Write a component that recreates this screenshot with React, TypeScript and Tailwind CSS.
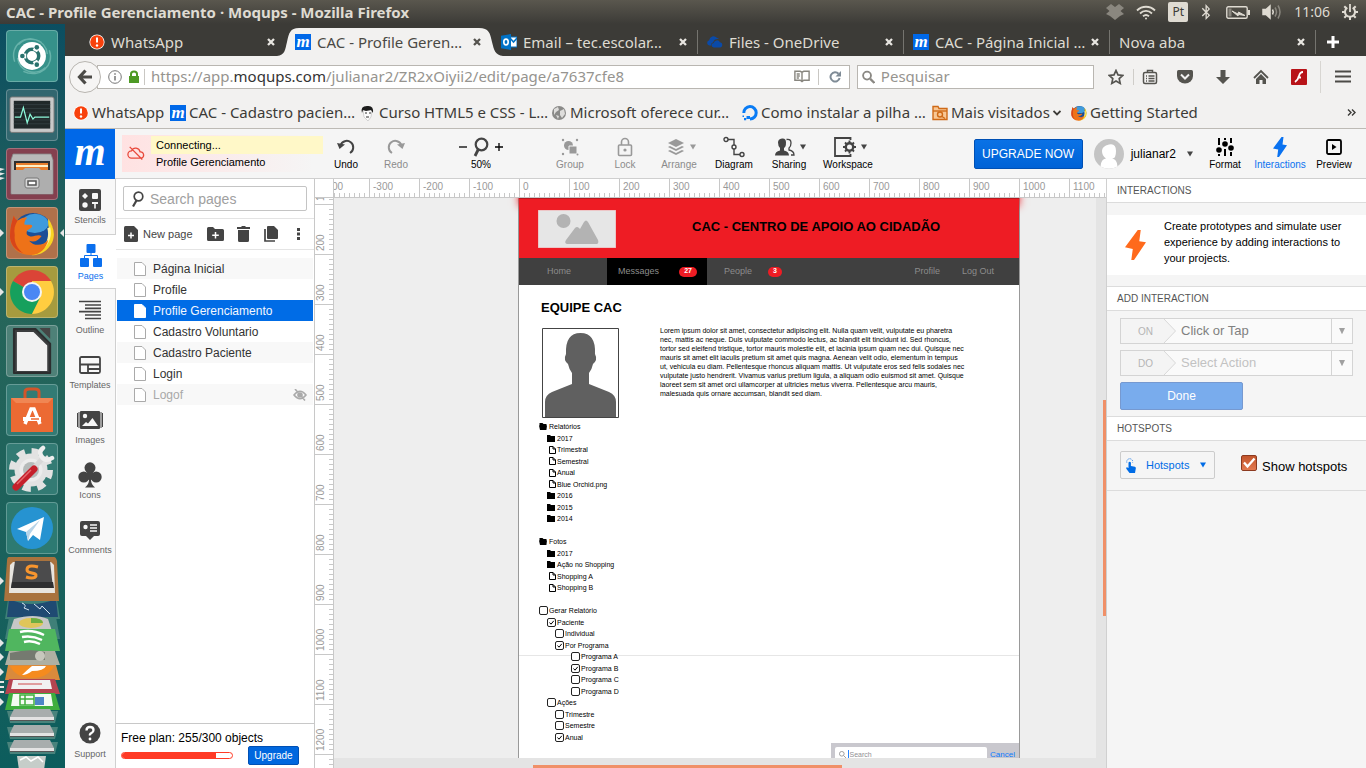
import React from "react";
import { FaBluetoothB } from "react-icons/fa";

type Kids = { children?: React.ReactNode };

const Caret = ({ className = "fill-[#444]" }: { className?: string }) => (
  <svg viewBox="0 0 8 6" className={"h-1.5 w-2 shrink-0 " + className} aria-hidden="true">
    <path d="M1 .5h6L4 5.5z" />
  </svg>
);

/* ---------- small brand marks ---------- */

const MoqupsMark = () => (
  <span className="flex size-4 shrink-0 items-center justify-center bg-[#0068e8] font-['Liberation_Serif',serif] text-[17px] leading-[14px] font-bold text-white italic">
    m
  </span>
);

const AlertMark = () => (
  <svg viewBox="0 0 16 16" className="size-4 shrink-0">
    <circle cx="8" cy="8" r="7.6" fill="#fff" />
    <circle cx="8" cy="8" r="6.8" fill="#f8410c" />
    <path d="M8 3.6v5" stroke="#fff" strokeWidth="2" />
    <circle cx="8" cy="11.5" r="1.2" fill="#fff" />
  </svg>
);

const FirefoxMark = ({ className = "size-4" }: { className?: string }) => (
  <svg viewBox="0 0 48 48" className={"shrink-0 " + className}>
    <circle cx="25" cy="24" r="21" fill="#1b4f97" />
    <ellipse cx="27" cy="14" rx="14" ry="10" fill="#3f9bdc" />
    <path d="M41 9c5 7 8 16 4 25-5 10-14 14-23 13 10-3 18-9 20-19 1-7-2-11-1-19z" fill="#f9d423" />
    <path d="M43 18c2 8 0 17-8 23 5-8 7-14 5-22z" fill="#fff3a0" />
    <path
      d="M5 6c1 3 2 4 4 5 3-2 6-4 10-3-2 2-3 4-3 7 3 1 6 0 8 1 1 2-2 4-5 5-1 3-1 5 2 6 4 2 8-2 13 0-3 5-8 7-13 5 5 6 14 6 20-1-2 9-9 16-18 16C10 47 1 39 1 27 1 19 3 12 5 6z"
      fill="#ee7218"
    />
    <path d="M5 6c1 3 2 4 4 5-3 5-4 9-3 15-1 8 3 15 9 19C6 42 1 35 1 27 1 19 3 12 5 6z" fill="#d8451a" />
  </svg>
);

const OutlookMark = () => (
  <svg viewBox="0 0 16 16" className="size-4 shrink-0">
    <path d="M9 3h7v10H9z" fill="#fff" stroke="#0072c6" />
    <path d="M9 4l3.500 4L16 4" fill="none" stroke="#0072c6" strokeWidth="1.500" />
    <path d="M0 1.700L10 0v16L0 14.300z" fill="#0072c6" />
    <ellipse cx="5" cy="8" rx="2.200" ry="2.900" fill="none" stroke="#fff" strokeWidth="1.600" />
  </svg>
);

const OneDriveMark = () => (
  <svg viewBox="0 0 16 16" className="size-4 shrink-0" fill="#0a4aa8">
    <path d="M2.500 11.500a2.700 2.700 0 0 1-.3-5.300A4.300 4.300 0 0 1 9.800 3.800 4 4 0 0 1 12 5Q7 4.500 6.300 8.200 4 8.800 4 11.500z" />
    <path d="M7 13.500a2.300 2.300 0 0 1-.3-4.600A3.400 3.400 0 0 1 13 8.200a2.700 2.700 0 0 1 .3 5.300z" />
  </svg>
);

/* ---------- desktop panel ---------- */

const TopPanel = () => (
  <header className="flex h-6 shrink-0 items-center bg-linear-to-b from-[#5a574e] to-[#3c3b37] pr-2 pl-1.5 text-[#dfdbd2]">
    <h1 className="flex-1 font-['Noto_Sans',sans-serif] text-[15px] font-bold">CAC - Profile Gerenciamento · Moqups - Mozilla Firefox</h1>
    <div className="flex items-center">
      <svg viewBox="0 0 18 16" className="mr-3 w-[18px] fill-[#8a877f]">
        <path d="M5 0l4 3 4-3 5 4-3.500 3L18 10l-4 2-5 4-5-4-4-2 3.500-3L0 4z" />
      </svg>
      <svg viewBox="0 0 20 15" className="mr-3 w-5 fill-none stroke-current" strokeWidth="1.800">
        <path d="M1 5.500c5-5 13-5 18 0M4 8.500c3.500-3.500 8.500-3.500 12 0M7 11.300c2-1.700 4-1.700 6 0" />
        <circle cx="10" cy="13.500" r="1" fill="currentColor" stroke="none" />
      </svg>
      <span className="mr-2.5 flex h-5 w-5 items-center justify-center rounded-xs bg-[#dfdbd2] font-['Noto_Sans',sans-serif] text-xs text-[#3c3b37]">Pt</span>
      <FaBluetoothB className="mr-3 size-4" />
      <svg viewBox="0 0 24 13" className="mr-3 w-6">
        <rect x=".8" y=".8" width="20.400" height="11.400" rx="1.500" fill="none" stroke="currentColor" strokeWidth="1.400" />
        <path d="M22 4h2v5h-2z" fill="currentColor" />
        <path d="M2.500 2.500h3v8h-3z" fill="#8a877f" />
        <path d="M6 5l6 3 .5-2L19 9.500l-6.500-1L12 10z" fill="currentColor" stroke="currentColor" />
      </svg>
      <svg viewBox="0 0 20 16" className="mr-3 w-5" fill="none" stroke="currentColor" strokeWidth="1.500">
        <path d="M1 5.500h3l4-3.500v12L4 10.500H1z" fill="currentColor" />
        <path d="M10.500 5.500q1.500 2.500 0 5" />
        <path d="M13 3.500q3 4.500 0 9M16 1.500q4 6.500 0 13" stroke="#8a877f" />
      </svg>
      <span className="mr-3 font-['Noto_Sans',sans-serif] text-sm">11:06</span>
      <svg viewBox="0 0 16 16" className="w-4" fill="none" stroke="currentColor">
        <path d="M5.300 3.600a5 5 0 1 0 5.400 0" strokeWidth="2" />
        <path d="M8 0v8" strokeWidth="1.800" />
        <path d="M8 13v3M0 8h3M13 8h3M2.300 2.300l2 2M13.700 2.300l-2 2M2.300 13.700l2-2M13.700 13.700l-2-2" strokeWidth="2" />
      </svg>
    </div>
  </header>
);

/* ---------- launcher ---------- */

const Tile = ({ tone, label, running, children }: Kids & { tone: string; label: string; running?: "left" | "both" | "many" }) => (
  <button aria-label={label} className={"relative ml-1.5 flex size-[52px] shrink-0 items-center justify-center rounded-sm border border-white/25 " + tone}>
    {children}
    {running && running !== "many" && (
      <svg viewBox="0 0 4 8" className="absolute top-[21px] -left-[7px] h-2 w-1 fill-[#e6e6e6]"><path d="M0 0l4 4-4 4z" /></svg>
    )}
    {running === "many" && (
      <svg viewBox="0 0 5 12" className="absolute top-[19px] -left-[7px] h-3 w-[5px] fill-[#e6e6e6]"><path d="M0 0l5 1-5 2zM0 4.500l5 1-5 2zM0 9l5 1-5 2z" /></svg>
    )}
    {running === "both" && (
      <svg viewBox="0 0 4 8" className="absolute top-[21px] -right-[7px] h-2 w-1 fill-[#e6e6e6]"><path d="M4 0L0 4l4 4z" /></svg>
    )}
  </button>
);

const Launcher = () => (
  <nav aria-label="Launcher" className="flex w-[65px] shrink-0 flex-col gap-[7px] overflow-hidden bg-linear-to-b from-[#0b4e61] via-[#27665a] via-35% to-[#0c5d5d] pt-1.5">
    <Tile tone="bg-[#36918a]" label="Dash">
      <svg viewBox="0 0 52 52" className="size-[50px]" fill="none">
        <path d="M8 32C2 14 20 2 36 12M44 20c6 16-10 30-27 22M12 14c10-10 28-6 30 10M40 38c-10 9-27 5-29-10" stroke="#7cc0b8" strokeWidth="1.500" opacity=".7" />
        <circle cx="26" cy="26" r="14.500" fill="#fff" />
        <circle cx="26" cy="26" r="7" stroke="#28716c" strokeWidth="3.600" />
        <path d="M14 26h6M32 15.500l-3 5.500M32 36.500L29 31" stroke="#fff" strokeWidth="5" />
        <circle cx="16" cy="26" r="2.400" fill="#28716c" />
        <circle cx="31" cy="17" r="2.400" fill="#28716c" />
        <circle cx="31" cy="35" r="2.400" fill="#28716c" />
      </svg>
    </Tile>
    <Tile tone="bg-[#3e6e76]/70" label="System monitor">
      <svg viewBox="0 0 48 40" className="w-[46px]">
        <rect x="1" y="1" width="46" height="37" rx="2" fill="#c9c9c9" stroke="#777" />
        <rect x="5" y="5" width="38" height="29" fill="#20292a" />
        <path d="M5 9h38M5 13h38M5 17h38M5 25h38M5 29h38" stroke="#39474a" strokeWidth=".7" />
        <path d="M6 22h6l3-10 4 16 3-9 3 5 2-2h15" fill="none" stroke="#8dfadb" strokeWidth="1.300" />
      </svg>
    </Tile>
    <Tile tone="bg-[#84404f]" label="Files" running="many">
      <svg viewBox="0 0 44 44" className="w-11">
        <path d="M3 2h38l2 6v34H1V8z" fill="#b9b9b9" stroke="#888" strokeWidth=".8" />
        <path d="M4 9h36v14H4z" fill="#303030" />
        <path d="M6 11h32v8H6z" fill="#e97e2c" />
        <path d="M6 13h32v2H6z" fill="#fff0c8" />
        <path d="M2 18h11l2-2h14l2 2h11v24H2z" fill="#aeaeae" />
        <rect x="15" y="26" width="14" height="10" rx="2" fill="#d7d7d7" stroke="#777" />
        <rect x="18" y="29" width="8" height="4" fill="#fff" stroke="#555" strokeWidth="1.500" />
      </svg>
    </Tile>
    <Tile tone="bg-[#b0714a]" label="Firefox" running="both"><FirefoxMark className="size-[46px]" /></Tile>
    <Tile tone="bg-[#a69b3e]" label="Chrome" running="left">
      <svg viewBox="0 0 44 44" className="size-11">
        <path d="M22 22L3 11A22 22 0 0 1 41 11z" fill="#db4437" />
        <path d="M22 22L3 11A22 22 0 0 0 22 44L30 28z" fill="#16a05d" />
        <path d="M41 11H22v11l8 6-8 16A22 22 0 0 0 41 11z" fill="#ffcd40" />
        <circle cx="22" cy="22" r="10" fill="#f5f5f5" />
        <circle cx="22" cy="22" r="8" fill="#4a87f4" />
      </svg>
    </Tile>
    <Tile tone="bg-[#4e8178]" label="LibreOffice">
      <svg viewBox="0 0 44 50" className="h-[49px]">
        <path d="M30 1h11v11z" fill="#454545" />
        <path d="M4 2h22l15 15v30H4z" fill="#3b3d3e" stroke="#2c2e2f" strokeLinejoin="round" strokeWidth="2" />
        <path d="M7 5h17l14 14v26H7z" fill="#f1f1f1" />
      </svg>
    </Tile>
    <Tile tone="bg-[#337b74]" label="Software">
      <svg viewBox="0 0 44 46" className="w-11" fill="none">
        <path d="M15 14V5q0-3 4-3h6q4 0 4 3v9" stroke="#d2552a" strokeWidth="3" />
        <path d="M1 11h42v34H1z" fill="#ec6a33" />
        <path d="M1 11h42l-5 5H6z" fill="#f08653" />
        <path d="M15 37l6-15h3l6 15" stroke="#fff" strokeWidth="3.500" />
        <path d="M13 32h18" stroke="#fff" strokeWidth="4" />
        <path d="M21 32h8" stroke="#ec6a33" strokeWidth="1.500" />
      </svg>
    </Tile>
    <Tile tone="bg-[#337b74]" label="Settings">
      <svg viewBox="0 0 48 48" className="w-12" fill="none">
        <circle cx="23" cy="25" r="18.500" stroke="#e2e2e2" strokeWidth="7" strokeDasharray="8 6.530" />
        <circle cx="23" cy="25" r="14" fill="#ececec" stroke="#e2e2e2" strokeWidth="5" />
        <circle cx="23" cy="25" r="8" fill="#b5bab9" />
        <path d="M9 41L36 12" stroke="#d8d8d8" strokeWidth="5" />
        <path d="M35 3q-5 4-1 9t10 1" stroke="#eee" strokeWidth="4.500" strokeLinecap="round" />
        <path d="M8 42l18-18" stroke="#c5202b" strokeWidth="7" strokeLinecap="round" />
        <path d="M9 39l14-14" stroke="#e56a6f" strokeWidth="1.500" />
      </svg>
    </Tile>
    <Tile tone="bg-[#2d7a72]" label="Telegram">
      <svg viewBox="0 0 44 44" className="w-11">
        <circle cx="22" cy="22" r="21" fill="#2693d1" />
        <path d="M34 11L7 23l9 3 2 9 5-6 7 5z" fill="#fff" />
        <path d="M16 26l14-12-10 14-2 7z" fill="#b8d4e8" />
      </svg>
    </Tile>
    <svg viewBox="0 0 65 211" className="-mt-1 w-[65px] shrink-0" aria-label="More applications">
      <path d="M9 36h47l4 26H5zM9 60h47l4 22H5z" fill="#3f8078" />
      <path d="M9 42q22 10 47 0l2 18H7z" fill="#1f4a72" />
      <path d="M22 46q5 2 2 5l5 2M34 47l6 5 2-3 8 8" stroke="#d6e4f0" fill="none" />
      <path d="M9 0h45q2 0 3 4l2 40H4L7 4q0-4 2-4z" fill="#a9733e" />
      <path d="M10 8l3-3h38l3 3 1 28H9z" fill="#e8e5df" />
      <path d="M15 4h35l3 27H11z" fill="#4b4b4c" />
      <path d="M12 25h41l1 6H11z" fill="#2f2f30" />
      <path d="M38 10q-11-3-11 3c0 4 10 2 9 6-1 3-7 2-10 1" fill="none" stroke="#f7952e" strokeWidth="3" />
      <path d="M14 62q20-6 34 0l4 12H10z" fill="#c7c7c7" />
      <ellipse cx="31" cy="66" rx="12" ry="5" fill="#e0c55a" />
      <path d="M31 61q12 0 12 5H31z" fill="#6dae43" />
      <path d="M9 72h46l5 22H5z" fill="#50b65f" />
      <path d="M20 75q12-3 24 3M22 80q10-2 20 3M24 85q8-2 16 2" stroke="#fff" strokeWidth="2.500" fill="none" />
      <path d="M9 94h46l5 14H5z" fill="#aeb0a3" />
      <path d="M10 96q20-5 35-1v8H10z" fill="#757a70" /><circle cx="40" cy="99" r="5" fill="#c6c7bc" />
      <path d="M8 108h48l4 15H5z" fill="#d98a3c" />
      <path d="M10 109h44q-6 12-22 12T10 109z" fill="#f58b1e" /><path d="M32 109h14q-2 5-14 5-5 4-10 4 5-5 10-9z" fill="#fff" />
      <path d="M9 122h46l5 15H5z" fill="#b54450" /><path d="M13 123h37l2 9H11z" fill="#f1f1f1" /><path d="M18 127h24" stroke="#cf4a4a" />
      <path d="M9 136h46l5 17H5z" fill="#3fae3d" /><path d="M13 137h38l2 12H11z" fill="#f4fbf2" />
      <path d="M20 138h14v10H20zM25 138v10M20 142h14" fill="none" stroke="#3fae3d" strokeWidth="1.500" /><path d="M35 140h9v8h-9z" fill="#4d86c6" />
      {[152, 168, 183].map((y) => (
        <g key={y}>
          <path d={`M10 ${y + 14}h45l3-12H7z`} fill="#4a837c" />
          <path d={`M14 ${y}h36l4 8H10z`} fill="#a8adad" />
          <path d={`M10 ${y + 8}h44v3H10z`} fill="#e3e3e3" />
          <path d={`M10 ${y + 11}h44v1H10z`} fill="#555" />
        </g>
      ))}
      <path d="M17 199h29l-2 14H19z" fill="#c6cdc9" />
      <path d="M20 203l6-3 5 4 7-4 5 5" stroke="#fff" fill="none" strokeWidth="1.500" />
      <path d="M0 20l4 4-4 4zM0 82l4 4-4 4zM0 96l4 4-4 4zM0 111l4 4-4 4zM0 141l4 4-4 4zM0 124h4v2H0zM0 129h4v2H0zM0 134h4v2H0z" fill="#e6e6e6" />
    </svg>
  </nav>
);

/* ---------- browser chrome ---------- */

const CloseX = ({ dark }: { dark?: boolean }) => (
  <button aria-label="Close tab" className="size-2.5 shrink-0">
    <svg viewBox="0 0 10 10" className={dark ? "stroke-[#55534e]" : "stroke-[#e8e6e1]"} strokeWidth="2.300"><path d="M2 2l6 6M8 2L2 8" /></svg>
  </button>
);

const tabs = [
  { label: "WhatsApp", icon: <AlertMark /> },
  { label: "CAC - Profile Geren…", icon: <MoqupsMark />, active: true },
  { label: "Email – tec.escolar…", icon: <OutlookMark />, line: true },
  { label: "Files - OneDrive", icon: <OneDriveMark />, line: true },
  { label: "CAC - Página Inicial …", icon: <MoqupsMark />, line: true },
  { label: "Nova aba", line: true },
];

const TabStrip = () => (
  <div role="tablist" className="flex h-8 items-center bg-[#3c3b37] pl-[15px] font-['Noto_Sans',sans-serif] text-[15px]">
    {tabs.map((t) => (
      <div
        key={t.label}
        role="tab"
        aria-selected={!!t.active}
        className={"relative flex h-8 max-w-[206px] min-w-0 flex-1 items-center gap-1.5 pt-1 pr-2.5 pl-[9px] " + (t.active ? "text-[#4a4945]" : "text-[#dfdbd2]")}
      >
        {t.active && (
          <svg viewBox="0 0 226 28" preserveAspectRatio="none" className="absolute top-1 -left-[9px] h-7 w-[226px] fill-[#f2f1f0]">
            <path d="M0 28c8-1 8-6 10-14C12 5 13 0 22 0h180c10 0 11 5 13 14 2 8 3 13 11 14z" />
          </svg>
        )}
        <span className="relative flex min-w-0 flex-1 items-center gap-1.5">
          {t.icon}
          <span className="whitespace-nowrap">{t.label}</span>
        </span>
        <span className="relative flex"><CloseX dark={t.active} /></span>
        {t.line && <span className="absolute top-1.5 right-0 h-6 w-px bg-[#75746f]" />}
      </div>
    ))}
    <button aria-label="New tab" className="ml-2.5 pt-1">
      <svg viewBox="0 0 14 14" className="size-3.5 stroke-white" strokeWidth="3"><path d="M7 1v12M1 7h12" /></svg>
    </button>
  </div>
);

const ToolIcon = ({ label, children }: Kids & { label: string }) => (
  <button aria-label={label} className="flex w-[38px] justify-center text-[#55544f]">{children}</button>
);

const NavBar = () => (
  <div className="flex h-[41px] items-center pr-0.5 pl-1">
    <button aria-label="Back" className="relative flex size-8 shrink-0 items-center justify-center rounded-full border border-[#b8b5b0] bg-[#f6f5f4]">
      <svg viewBox="0 0 16 16" className="size-4 fill-none stroke-[#4c4b47]" strokeWidth="3.200"><path d="M8.500 1.500L2.500 8l6 6.500M3 8h12" /></svg>
    </button>
    <div className="-ml-1 flex h-6 flex-1 items-center border border-[#b9b6b1] bg-white pr-2 pl-2.5">
      <svg viewBox="0 0 14 14" className="mr-1.5 size-3.5 fill-none stroke-[#777]"><circle cx="7" cy="7" r="6.300" /><path d="M7 6v4.500M7 3.300v1.500" strokeWidth="1.500" /></svg>
      <svg viewBox="0 0 12 14" className="mr-1 h-3.5 w-3" fill="#4e9a25"><path d="M1 6h10v7H1z" /><path d="M3 7V4q0-2.500 3-2.500T9 4v3" fill="none" stroke="#4e9a25" strokeWidth="2" /></svg>
      <span className="mr-1.5 h-4 w-px bg-[#c9c7c3]" />
      <span className="flex-1 font-['Noto_Sans',sans-serif] text-[15px] text-[#96948f]">
        https://app.<span className="text-[#333]">moqups.com</span>/julianar2/ZR2xOiyii2/edit/page/a7637cfe8
      </span>
      <svg viewBox="0 0 18 14" className="mr-2 w-4 fill-none stroke-[#88867f]" strokeWidth="1.600"><path d="M1 1.500h6l2 1 2-1h6v10h-6l-2 1.500-2-1.500H1zM9 3v9M3 4.500h3.500M3 6.800h3.500M3 9h2.500" /></svg>
      <span className="mr-2.5 h-4 w-px bg-[#c9c7c3]" />
      <svg viewBox="0 0 12 12" className="size-3 fill-none stroke-[#7f8b96]" strokeWidth="2"><path d="M9.500 2.800A4.600 4.600 0 1 0 10.600 7" /><path d="M12 0v5.500H6.500z" fill="#7f8b96" stroke="none" /></svg>
    </div>
    <div className="ml-[7px] flex h-6 w-[237px] items-center border border-[#b9b6b1] bg-white px-1">
      <svg viewBox="0 0 14 14" className="mr-1.5 size-3.5 fill-none stroke-[#8a8883]" strokeWidth="2"><circle cx="5.500" cy="5.500" r="4.300" /><path d="M9 9l4.500 4.500" strokeWidth="2.500" /></svg>
      <input aria-label="Pesquisar" placeholder="Pesquisar" className="w-full bg-transparent font-['Noto_Sans',sans-serif] text-[15px] outline-none placeholder:text-[#96948f]" />
    </div>
    <div className="flex items-center pl-1">
      <button aria-label="Bookmark" className="flex w-9 justify-center border-r border-[#cfcdc9] text-[#55544f]">
        <svg viewBox="0 0 16 16" className="size-4 fill-none stroke-current" strokeWidth="1.700"><path d="M8 1.500l2 4.400 4.800.5-3.600 3.200 1 4.800L8 12l-4.200 2.400 1-4.800L1.200 6.400 6 5.900z" /></svg>
      </button>
      <button aria-label="Library" className="flex w-8 justify-center text-[#55544f]">
        <svg viewBox="0 0 16 16" className="size-4 fill-none stroke-current" strokeWidth="1.500"><rect x="1.500" y="3.500" width="13" height="11" rx="1.500" /><path d="M5.500 3V1.500h5V3M4 7h1M6.500 7h6M4 9.500h1M6.500 9.500h6M4 12h1M6.500 12h6" /></svg>
      </button>
      <ToolIcon label="Pocket"><svg viewBox="0 0 16 16" className="size-4"><path d="M1.500 1h13q1.500 0 1.500 1.500V7a8 7.500 0 0 1-16 0V2.500Q0 1 1.500 1z" fill="currentColor" /><path d="M4 5.500l4 4 4-4" fill="none" stroke="#f2f1f0" strokeWidth="2" /></svg></ToolIcon>
      <ToolIcon label="Downloads"><svg viewBox="0 0 16 16" className="size-4 fill-current"><path d="M5.500 1h5v7H15l-7 7-7-7h4.500z" /></svg></ToolIcon>
      <ToolIcon label="Home"><svg viewBox="0 0 16 16" className="size-4"><path d="M1 9l7-7 7 7" fill="none" stroke="currentColor" strokeWidth="1.800" /><path d="M3 10l5-5 5 5v5H9.500v-4h-3v4H3z" fill="currentColor" /></svg></ToolIcon>
      <ToolIcon label="Flash"><svg viewBox="0 0 16 16" className="size-4"><rect width="16" height="16" rx="1" fill="#b81318" /><path d="M12 3Q9 3 8 7T4 13M6.500 8.500H10" fill="none" stroke="#fff" strokeWidth="1.800" /></svg></ToolIcon>
      <button aria-label="Menu" className="ml-0.5 flex h-8 w-11 items-center justify-center border-l border-[#d8d6d2] text-[#4c4b47]">
        <svg viewBox="0 0 16 13" className="w-4 stroke-current" strokeWidth="2.200"><path d="M0 1.500h16M0 6.500h16M0 11.500h16" /></svg>
      </button>
    </div>
  </div>
);

const bookmarks = [
  { w: "w-[97px]", label: "WhatsApp", icon: <AlertMark /> },
  { w: "w-[190px]", label: "CAC - Cadastro pacien…", icon: <MoqupsMark /> },
  {
    w: "w-[191px]",
    label: "Curso HTML5 e CSS - L…",
    icon: (
      <svg viewBox="0 0 16 16" className="size-4 shrink-0"><path d="M3 5h9l-1 7-3 4-4-4z" fill="#fbfbfb" stroke="#bbb" strokeWidth=".6" /><path d="M2 8Q0 1 7 1q7-1 6 7l-2-3-5 1-3-1z" fill="#1c1c1c" /><path d="M5 8h2M9 8h2M6 12h3" stroke="#333" /></svg>
    ),
  },
  {
    w: "w-[191px]",
    label: "Microsoft oferece cur…",
    icon: (
      <svg viewBox="0 0 16 16" className="size-4 shrink-0"><circle cx="8" cy="8" r="7" fill="#8a8a88" /><path d="M3 4l4-2 1 3-3 2-2 3zM9 6l4-2 1 5-3 4-2-3zM5 10l3 1-1 3z" fill="#dedddb" /></svg>
    ),
  },
  {
    w: "w-[190px]",
    label: "Como instalar a pilha …",
    icon: (
      <svg viewBox="0 0 16 16" className="size-4 shrink-0"><path d="M8 14a6.200 6.200 0 1 0-6.200-6" fill="none" stroke="#0a7cf5" strokeWidth="3" /><path d="M4.500 11H8v3H4.500zM2 13h2.200v2.200H2zM.5 10.500h1.500v1.500H.5z" fill="#0a7cf5" /></svg>
    ),
  },
  {
    w: "w-[139px]",
    label: "Mais visitados",
    arrow: true,
    icon: (
      <svg viewBox="0 0 16 16" className="size-4 shrink-0 fill-none stroke-[#cf6a17]" strokeWidth="1.400"><path d="M1 14.500V1.500h5l1 2h8v11z" fill="#f8c795" /><path d="M1 6h14" /><circle cx="8" cy="9.500" r="2.500" /><path d="M10 11.500l3 2" /></svg>
    ),
  },
  { w: "w-[130px]", label: "Getting Started", icon: <FirefoxMark /> },
];

const BookmarkBar = () => (
  <div className="flex h-8 items-center border-b border-[#bdbab5] pl-2 font-['Noto_Sans',sans-serif] text-[15px] text-[#3c3b37]">
    {bookmarks.map((b) => (
      <a key={b.label} href="#" className={"flex shrink-0 items-center gap-[3px] whitespace-nowrap " + b.w}>
        {b.icon}
        <span>{b.label}</span>
        {b.arrow && <svg viewBox="0 0 8 6" className="w-2 shrink-0 fill-none stroke-current" strokeWidth="1.800"><path d="M.5 1L4 4.500 7.500 1" /></svg>}
      </a>
    ))}
    <button aria-label="More bookmarks" className="mr-2.5 ml-auto">
      <svg viewBox="0 0 9 7" className="w-[9px] fill-none stroke-current" strokeWidth="1.400"><path d="M1 .5l3 3-3 3M5 .5l3 3-3 3" /></svg>
    </button>
  </div>
);

/* ---------- application header ---------- */

const Tool = ({ label, w, tone = "text-black", icon = "text-[#444]", children }: Kids & { label: string; w: string; tone?: string; icon?: string }) => (
  <button className={"flex shrink-0 flex-col items-center gap-0.5 pt-px text-[10px] leading-3 " + w + " " + tone}>
    <span className={"flex h-5 items-center gap-1 " + icon}>{children}</span>
    {label}
  </button>
);

const Bolt = ({ className }: { className: string }) => (
  <svg viewBox="0 0 14 20" className={"fill-current " + className}><path d="M8.500 0h2l-1 7.500 4.500.7L6 20H4.200l1-7.400L0 11.500z" /></svg>
);

const AppHeader = () => (
  <header className="flex h-[50px] shrink-0 items-center border-b border-[#cfcfcf] bg-[#f5f5f5]">
    <a href="#" aria-label="Moqups" className="flex h-[50px] w-[50px] shrink-0 items-center justify-center self-start bg-[#0068e8] pb-1 font-['Liberation_Serif',serif] text-[40px] leading-none font-bold text-white italic">
      m
    </a>
    <div className="mr-2 ml-[7px] flex h-[37px] w-[191px] shrink-0 items-center bg-linear-to-r from-[#ffe2e2] to-[#f5f5f5] text-[11px] text-black">
      <svg viewBox="0 0 20 16" className="mr-1.5 ml-[5px] w-[18px] shrink-0 fill-none stroke-[#e8483a]" strokeWidth="1.400">
        <path d="M5.500 13.500H5a4 4 0 0 1 0-8 5 5 0 0 1 9.500 1A3.600 3.600 0 0 1 16 13.500H5.500M3 1l14 14" />
      </svg>
      <div className="-mr-2.5 flex-1 self-start pt-px">
        <p className="bg-[#fff8c8] pl-[5px] leading-[18px]">Connecting...</p>
        <p className="pl-[5px] leading-[17px]">Profile Gerenciamento</p>
      </div>
    </div>
    <Tool label="Undo" w="w-[50px]">
      <svg viewBox="0 0 18 16" className="w-[18px] fill-none stroke-current" strokeWidth="2"><path d="M3.500 6.500A6.500 6.500 0 1 1 13 14" /><path d="M0 4l8 1.500L2.500 10z" fill="currentColor" stroke="none" /></svg>
    </Tool>
    <Tool label="Redo" w="w-[50px]" tone="text-[#8b8b8b]" icon="text-[#999]">
      <svg viewBox="0 0 18 16" className="w-[18px] -scale-x-100 fill-none stroke-current" strokeWidth="2"><path d="M3.500 6.500A6.500 6.500 0 1 1 13 14" /><path d="M0 4l8 1.500L2.500 10z" fill="currentColor" stroke="none" /></svg>
    </Tool>
    <Tool label="50%" w="w-[120px]">
      <svg viewBox="0 0 8 8" className="w-2 stroke-black" strokeWidth="1.300"><path d="M0 4h8" /></svg>
      <svg viewBox="0 0 18 20" className="mx-px w-[18px] fill-none stroke-current" strokeWidth="2.200"><circle cx="9.500" cy="7.500" r="5.800" /><path d="M6.500 12L3 19" strokeWidth="2.800" /></svg>
      <svg viewBox="0 0 8 8" className="w-2 stroke-black" strokeWidth="1.300"><path d="M0 4h8M4 0v8" /></svg>
    </Tool>
    <Tool label="Group" w="w-[58px]" tone="text-[#8b8b8b]" icon="text-[#999]">
      <svg viewBox="0 0 18 18" className="w-[18px] fill-current"><circle cx="7.500" cy="7.500" r="4.500" /><path d="M8 8h8v8H8z" stroke="#f5f5f5" /><circle cx="2" cy="2" r="1.200" /><circle cx="16" cy="2" r="1.200" /><circle cx="2" cy="16" r="1.200" /><circle cx="16.500" cy="16.500" r="1" /></svg>
    </Tool>
    <Tool label="Lock" w="w-[52px]" tone="text-[#8b8b8b]" icon="text-[#999]">
      <svg viewBox="0 0 16 20" className="h-5 fill-none stroke-current" strokeWidth="1.600"><rect x="1.500" y="8" width="13" height="10.500" rx="1" /><path d="M4.500 8V5a3.500 3.500 0 0 1 7 0v3" /><circle cx="8" cy="13" r="1.600" fill="currentColor" stroke="none" /></svg>
    </Tool>
    <Tool label="Arrange" w="w-[56px]" tone="text-[#8b8b8b]" icon="text-[#999]">
      <svg viewBox="0 0 18 18" className="ml-1.5 w-[18px] fill-current"><path d="M9 1l8 4-8 4-8-4zM1 9l2-1 6 3 6-3 2 1-8 4zM1 13l2-1 6 3 6-3 2 1-8 4z" /></svg>
      <Caret className="fill-[#999]" />
    </Tool>
    <Tool label="Diagram" w="w-[54px]">
      <svg viewBox="0 0 22 22" className="w-[22px] fill-none stroke-current" strokeWidth="1.400"><circle cx="3" cy="3.500" r="2" /><circle cx="11" cy="11" r="2" /><circle cx="19" cy="18.500" r="2" /><path d="M5 3.500h6V9M11 13v5.500h6" /></svg>
    </Tool>
    <Tool label="Sharing" w="w-[56px]">
      <svg viewBox="0 0 20 18" className="ml-1 w-5 fill-current"><path d="M0 17.500q0-4 5-5V10Q3 8 3 4.500T7 .5t4 4T9 10v2.500q5 1 5 5z" /><path d="M11.500 1.500q4.500-1 4.500 3.500Q16 8.500 14 10v2q5 1 5 5h-3" fill="none" stroke="currentColor" strokeWidth="1.300" /></svg>
      <Caret />
    </Tool>
    <Tool label="Workspace" w="w-[62px]">
      <svg viewBox="0 0 22 20" className="ml-1.5 w-[22px] fill-none stroke-current"><path d="M16.500 3V1H1v18h15.500v-2" strokeWidth="1.800" /><circle cx="15.500" cy="10" r="3.700" strokeWidth="2.400" /><path d="M15.500 3.500v3M15.500 13.500v3M9 10h3M19 10h3M11 5.500l2 2M20 5.500l-2 2M11 14.500l2-2M20 14.500l-2-2" strokeWidth="1.900" /></svg>
      <Caret />
    </Tool>
    <div className="ml-auto flex items-center">
      <button className="h-[30px] w-[109px] rounded-xs border border-[#0050b4] bg-linear-to-b from-[#0a72e6] to-[#0062d6] text-xs text-white">UPGRADE NOW</button>
      <svg viewBox="0 0 30 30" className="ml-[11px] size-[30px]"><circle cx="15" cy="15" r="15" fill="#c4c4c4" /><path d="M6.500 27.500Q7 20 12 19.500 8 17 8 12t7-6.500T22 12t-4 7.500q5 .5 5.500 8Q15 32 6.500 27.500z" fill="#fff" /></svg>
      <button className="ml-[7px] flex items-center gap-2.5 text-xs text-black">julianar2 <Caret /></button>
      <Tool label="Format" w="ml-1 w-[54px]" icon="text-black">
        <svg viewBox="0 0 18 20" className="w-[18px] fill-current"><path d="M2 1h2v7H2zM2 17h2v2H2zM8 1h2v2H8zM8 12h2v7H8zM14 1h2v5h-2zM14 15h2v4h-2z" /><circle cx="3" cy="13" r="2.800" /><circle cx="9" cy="7" r="2.800" /><circle cx="15" cy="11" r="2.800" /></svg>
      </Tool>
      <Tool label="Interactions" w="w-[56px]" tone="text-[#0a72f0]" icon="text-[#0a72f0]"><Bolt className="h-5 w-3.5" /></Tool>
      <Tool label="Preview" w="mr-1.5 w-[52px]" icon="text-black">
        <svg viewBox="0 0 16 16" className="w-4"><rect x="1" y="1" width="14" height="14" rx="1.500" fill="none" stroke="currentColor" strokeWidth="1.800" /><path d="M6 5l4.500 3L6 11z" fill="currentColor" /></svg>
      </Tool>
    </div>
  </header>
);

/* ---------- left rail ---------- */

const railItems = [
  { label: "Stencils", icon: <svg viewBox="0 0 22 22" className="w-[22px]"><rect width="22" height="22" rx="2" fill="currentColor" /><g fill="#f8f8f8"><path d="M6 4l3 3-3 3-3-3z" /><rect x="13" y="4" width="6" height="6" rx="1" /><circle cx="6" cy="16" r="2.700" /><path d="M13 13h6v2h-2.200v4.500h-1.600V15H13z" /></g></svg> },
  { label: "Pages", icon: <svg viewBox="0 0 22 24" className="w-[22px] fill-current"><rect x="6.500" width="9" height="9" rx="1" /><rect y="14" width="9" height="9" rx="1" /><rect x="13" y="14" width="9" height="9" rx="1" /><path d="M11 9v2M4.500 14v-2.500h13V14" fill="none" stroke="currentColor" /></svg> },
  { label: "Outline", icon: <svg viewBox="0 0 22 20" className="w-[22px] stroke-current" strokeWidth="1.700"><path d="M0 1.500h22M6 5h16M6 8.300h16M0 11.700h22M6 15h16M6 18.500h16" /></svg> },
  { label: "Templates", icon: <svg viewBox="0 0 22 18" className="w-[22px] fill-none stroke-current" strokeWidth="1.800"><rect x="1" y="1" width="20" height="16" rx="1.500" /><path d="M1 8.500h20M9 8.500V17M9 13h12" /></svg> },
  { label: "Images", icon: <svg viewBox="0 0 26 18" className="w-[26px] fill-current"><path d="M0 2h1v14H0zM25 2h1v14h-1zM1.500 1h1v16h-1zM23.500 1h1v16h-1z" /><rect x="3" width="20" height="18" rx="1" /><circle cx="8" cy="5" r="2.200" fill="#f8f8f8" /><path d="M5 15l4-4 2 1.500L15.500 7l5.500 8z" fill="#f8f8f8" /></svg> },
  { label: "Icons", icon: <svg viewBox="0 0 24 26" className="w-6 fill-current"><circle cx="12" cy="5.800" r="5.500" /><circle cx="5.800" cy="15" r="5.500" /><circle cx="18.200" cy="15" r="5.500" /><path d="M10 8h4l3 8-4 2q0 4 4 7.500H7Q11 22 11 18l-4-2z" /></svg> },
  { label: "Comments", icon: <svg viewBox="0 0 20 19" className="w-5 fill-current"><path d="M2 0h16q2 0 2 2v11q0 2-2 2h-4l-4 4-4-4H2q-2 0-2-2V2Q0 0 2 0z" /><circle cx="5.500" cy="6" r="2.200" fill="#f8f8f8" /><path d="M10 4h7M10 7h7M10 10h7" stroke="#f8f8f8" strokeWidth="1.500" /></svg> },
];

const Rail = () => (
  <nav aria-label="Tools" className="flex w-[51px] shrink-0 flex-col bg-[#f8f8f8]">
    {railItems.map((r) => (
      <button
        key={r.label}
        className={
          "flex h-[55px] shrink-0 flex-col items-center text-[9px] leading-3 " +
          (r.label === "Pages" ? "border-y border-[#d0d0d0] bg-white text-[#0a6fee]" : "border-r border-[#d0d0d0] text-[#666]")
        }
      >
        <span className={"flex h-[34px] items-center pt-2 " + (r.label === "Pages" ? "text-[#0a6fee]" : "text-[#444]")}>{r.icon}</span>
        <span className="mt-px">{r.label}</span>
      </button>
    ))}
    <div className="flex flex-1 flex-col items-center justify-end border-r border-[#d0d0d0] pb-2 text-[9px] leading-3 text-[#666]">
      <svg viewBox="0 0 22 22" className="mb-1 w-[22px]"><circle cx="11" cy="11" r="10.500" fill="#444" /><path d="M7.500 8.500q0-3.500 3.500-3.500t3.500 3q0 2-2 3t-1.500 2.500" fill="none" stroke="#fff" strokeWidth="2.300" /><circle cx="11" cy="17" r="1.400" fill="#fff" /></svg>
      Support
    </div>
  </nav>
);

/* ---------- pages panel ---------- */

const pages = ["Página Inicial", "Profile", "Profile Gerenciamento", "Cadastro Voluntario", "Cadastro Paciente", "Login", "Logof"];

const PagesPanel = () => (
  <aside className="flex w-[199px] shrink-0 flex-col border-r border-[#c8c8c8] bg-white">
    <div className="border-b border-[#e4e4e4] px-[7px] pt-[7px] pb-[7px]">
      <div className="flex h-[25px] items-center rounded-xs border border-[#c4c4c4] pl-2">
        <svg viewBox="0 0 12 16" className="mr-1.5 h-4 shrink-0 fill-none stroke-[#444]" strokeWidth="1.700"><circle cx="6.500" cy="5.500" r="4.300" /><path d="M4.500 9.500l-3.500 6" strokeWidth="2.200" /></svg>
        <input aria-label="Search pages" placeholder="Search pages" className="w-full text-sm outline-none placeholder:text-[#a0a0a0]" />
      </div>
    </div>
    <div className="flex h-[31px] items-center border-b border-[#e4e4e4] pl-2 text-[#444]">
      <button className="flex items-center gap-[5px] text-[11px]">
        <svg viewBox="0 0 14 16" className="w-3.5"><path d="M1.500 0H10l4 4v10.500q0 1.500-1.500 1.500h-11Q0 16 0 14.500v-13Q0 0 1.500 0z" fill="currentColor" /><path d="M7 6.500v6M4 9.500h6" stroke="#fff" strokeWidth="1.500" /></svg>
        New page
      </button>
      <button aria-label="New folder" className="ml-[14px]"><svg viewBox="0 0 17 14" className="w-[17px]"><path d="M0 1.500Q0 0 1.500 0H6l2 2h7.500Q17 2 17 3.500v9q0 1.500-1.500 1.500h-14Q0 14 0 12.500z" fill="currentColor" /><path d="M8.500 5v6.500M5.200 8.200h6.600" stroke="#fff" strokeWidth="1.500" /></svg></button>
      <button aria-label="Delete page" className="ml-[13px]"><svg viewBox="0 0 13 16" className="w-[13px] fill-current"><path d="M0 1h4l1-1h3l1 1h4v2H0zM1 4h11v10.500q0 1.500-1.500 1.500h-8Q1 16 1 14.500z" /></svg></button>
      <button aria-label="Duplicate page" className="ml-[14px]"><svg viewBox="0 0 14 16" className="w-3.5 fill-current"><path d="M4 0h6l4 4v8q0 1-1 1H4q-1 0-1-1V1q0-1 1-1z" /><path d="M1 3v12h10" fill="none" stroke="currentColor" strokeWidth="1.700" /></svg></button>
      <button aria-label="More" className="ml-[19px]"><svg viewBox="0 0 3 12" className="w-[3px] fill-current"><path d="M0 0h3v3H0zM0 4.500h3v3H0zM0 9h3v3H0z" /></svg></button>
    </div>
    <ul className="flex-1 pt-2 pr-px pl-px text-xs text-[#333]">
      {pages.map((p, i) => (
        <li
          key={p}
          className={
            "flex h-[21px] items-center pr-1.5 pl-[17px] " +
            (i === 2 ? "bg-[#006ce6] text-[#f2f7ff]" : i % 2 === 0 ? "bg-[#f8f8f8]" : "") +
            (p === "Logof" ? " text-[#a8a8a8]" : "")
          }
        >
          <svg viewBox="0 0 12 14" className={"mr-[7px] w-3 fill-white " + (i === 2 ? "stroke-white" : "stroke-[#aaa]")}><path d="M.5.500H8L11.500 4v9.500H.5z" /></svg>
          <a href="#" className="flex-1">{p}</a>
          {p === "Logof" && (
            <svg viewBox="0 0 14 12" className="w-3.5 fill-none stroke-[#aaa]" strokeWidth="1.600"><path d="M1 6q6-7.500 12 0-6 7.500-12 0zM2 0l10 11.500" /><circle cx="7" cy="6" r="2" fill="#aaa" /></svg>
          )}
        </li>
      ))}
    </ul>
    <div className="h-[45px] border-t border-[#c8c8c8] px-[5px] pt-1.5">
      <p className="text-xs leading-4 text-black">Free plan: 255/300 objects</p>
      <div className="flex items-center justify-between pr-2.5">
        <div className="h-[7px] w-28 overflow-hidden rounded-full border border-[#ff3b26]"><div className="h-full w-[85%] bg-[#ff3b26]" /></div>
        <button className="h-[19px] w-[51px] rounded-xs border border-[#0050b4] bg-[#0067de] text-[10px] leading-4 text-white">Upgrade</button>
      </div>
    </div>
  </aside>
);

/* ---------- canvas ---------- */

const hLabels = ["-400", "-300", "-200", "-100", "0", "100", "200", "300", "400", "500", "600", "700", "800", "900", "1000", "1100"];
const vLabels = ["100", "200", "300", "400", "500", "600", "700", "800", "900", "1000", "1100", "1200", ""];

const HRuler = () => (
  <div className="h-[19px] shrink-0 overflow-hidden border-b border-[#c8c8c8] bg-white pl-[18px]">
    <div className="h-full overflow-hidden border-l border-[#c8c8c8]">
      <div className="-ml-[15px] flex h-full text-[10px] leading-4 text-[#999]">
        {hLabels.map((l) => (
          <div key={l} className="flex w-[50px] shrink-0 flex-col border-l border-[#c8c8c8]">
            <span className="h-3.5 pl-[3px]">{l}</span>
            <span className="-ml-px h-1 bg-[repeating-linear-gradient(to_right,#c8c8c8_0,#c8c8c8_1px,transparent_1px,transparent_5px)]" />
          </div>
        ))}
      </div>
    </div>
  </div>
);

const VRuler = () => (
  <div className="w-[19px] shrink-0 overflow-hidden border-r border-[#c8c8c8] bg-white">
    <div className="-mt-[43px] text-[10px] leading-3 text-[#999]">
      {vLabels.map((l) => (
        <div key={l} className="flex h-[50px] border-b border-[#c8c8c8]">
          <span className="w-3.5 rotate-180 pt-[3px] [writing-mode:vertical-rl]">{l}</span>
          <span className="-mb-px w-1 bg-[repeating-linear-gradient(to_top,#c8c8c8_0,#c8c8c8_1px,transparent_1px,transparent_5px)]" />
        </div>
      ))}
    </div>
  </div>
);

type Node = { t: string; k: "open" | "dir" | "file" | "off" | "on" | "gap"; d: number };
const tree: Node[] = [
  { t: "Relatórios", k: "open", d: 0 },
  { t: "2017", k: "dir", d: 1 },
  { t: "Trimestral", k: "file", d: 1 },
  { t: "Semestral", k: "file", d: 1 },
  { t: "Anual", k: "file", d: 1 },
  { t: "Blue Orchid.png", k: "file", d: 1 },
  { t: "2016", k: "dir", d: 1 },
  { t: "2015", k: "dir", d: 1 },
  { t: "2014", k: "dir", d: 1 },
  { t: "", k: "gap", d: 0 },
  { t: "Fotos", k: "open", d: 0 },
  { t: "2017", k: "dir", d: 1 },
  { t: "Ação no Shopping", k: "dir", d: 1 },
  { t: "Shopping A", k: "file", d: 1 },
  { t: "Shopping B", k: "file", d: 1 },
  { t: "", k: "gap", d: 0 },
  { t: "Gerar Relatório", k: "off", d: 0 },
  { t: "Paciente", k: "on", d: 1 },
  { t: "Individual", k: "off", d: 2 },
  { t: "Por Programa", k: "on", d: 2 },
  { t: "Programa A", k: "off", d: 3 },
  { t: "Programa B", k: "on", d: 3 },
  { t: "Programa C", k: "off", d: 3 },
  { t: "Programa D", k: "off", d: 3 },
  { t: "Ações", k: "off", d: 1 },
  { t: "Trimestre", k: "off", d: 2 },
  { t: "Semestre", k: "off", d: 2 },
  { t: "Anual", k: "on", d: 2 },
];
const indents = ["pl-0", "pl-2", "pl-4", "pl-8"];

const TreeRow = ({ n }: { n: Node }) => {
  const row = "flex items-center " + indents[n.d];
  if (n.k === "off" || n.k === "on")
    return (
      <li className="grid">
        <label className={row}>
          <span className="relative flex w-2.5">
            <input type="checkbox" defaultChecked={n.k === "on"} className="peer size-[9px] appearance-none rounded-[2px] border border-[#222] bg-white" />
            <svg viewBox="0 0 9 9" className="pointer-events-none absolute size-[9px] fill-none stroke-black opacity-0 peer-checked:opacity-100"><path d="M2.500 4.500l1.500 1.700L6.800 2.800" /></svg>
          </span>
          {n.t}
        </label>
      </li>
    );
  return (
    <li className={row}>
      {n.k !== "gap" && (
        <span className="flex w-2.5">
          {n.k === "file" && <svg viewBox="0 0 7 8" className="ml-0.5 h-2 fill-white stroke-black"><path d="M.5.500h3.500L6.500 3v4.500h-6zM4 .5V3h2.500" /></svg>}
          {n.k === "dir" && <svg viewBox="0 0 8 7" className="w-2"><path d="M0 0h3l1 1h4v6H0z" /></svg>}
          {n.k === "open" && <svg viewBox="0 0 8 7" className="w-2"><path d="M.5 0h3l1 1H7.500v1.500h.5L7.400 7H1L0 2.500h.5z" /></svg>}
        </span>
      )}
      {n.t}
    </li>
  );
};

const lorem = [
  "Lorem ipsum dolor sit amet, consectetur adipiscing elit. Nulla quam velit, vulputate eu pharetra",
  "nec, mattis ac neque. Duis vulputate commodo lectus, ac blandit elit tincidunt id. Sed rhoncus,",
  "tortor sed eleifend tristique, tortor mauris molestie elit, et lacinia ipsum quam nec dui. Quisque nec",
  "mauris sit amet elit iaculis pretium sit amet quis magna. Aenean velit odio, elementum in tempus",
  "ut, vehicula eu diam. Pellentesque rhoncus aliquam mattis. Ut vulputate eros sed felis sodales nec",
  "vulputate justo hendrerit. Vivamus varius pretium ligula, a aliquam odio euismod sit amet. Quisque",
  "laoreet sem sit amet orci ullamcorper at ultricies metus viverra. Pellentesque arcu mauris,",
  "malesuada quis ornare accumsan, blandit sed diam.",
];

const Badge = ({ children }: Kids) => (
  <span className="flex h-2.5 items-center rounded-full bg-[#ee1c24] px-[5px] text-[7px] font-bold text-white">{children}</span>
);

const PageArt = () => (
  <div className="relative ml-[184px] flex min-h-full w-[502px] flex-col border-x border-[#999] bg-white text-black">
    <div className="flex h-[60px] shrink-0 items-center border-t border-[#b5161c] bg-[#ee1c24] pl-[19px] shadow-[0_-52px_8px_#ee1c24]">
      <svg viewBox="0 0 78 38" className="w-[78px]"><path d="M0 0h78v38H0z" fill="#e6e6e6" stroke="#f4a5a8" /><circle cx="25.500" cy="11" r="7" fill="#b3b3b3" /><path d="M29 34q-3-1-1-4l9-12q2-2 4 0l1 1 4-7q2-3 4 0l10 18q1 3-1 4z" fill="#b3b3b3" /></svg>
      <h2 className="ml-[76px] pb-1 text-[13px] font-bold">CAC - CENTRO DE APOIO AO CIDADÃO</h2>
    </div>
    <div className="flex h-[27px] shrink-0 items-stretch bg-[#404040] text-[9px] text-[#8c8c8c]">
      <span className="flex w-[88px] items-center pl-7">Home</span>
      <span className="flex w-[100px] items-center justify-between bg-black pr-2.5 pl-[11px]">Messages <Badge>27</Badge></span>
      <span className="flex flex-1 items-center gap-4 pl-[17px]">People <Badge>3</Badge></span>
      <span className="flex items-center gap-[22px] pr-[25px]"><span>Profile</span><span>Log Out</span></span>
    </div>
    <h3 className="pt-[15px] pl-[22px] text-[13px] leading-4 font-bold">EQUIPE CAC</h3>
    <div className="mt-3 flex pl-[23px]">
      <svg viewBox="0 0 77 90" className="w-[77px] shrink-0"><path d="M.5.500h76v89H.5z" fill="#fff" stroke="#444" /><path d="M3 89V74q0-7 7-10l20-8V45q-3-4-4-9-5-4-2-10Q23 5 38.500 5T53 26q3 6-2 10-1 5-4 9v11l20 8q7 3 7 10v15z" fill="#606060" /></svg>
      <p className="ml-[41px] -mt-0.5 text-[7px] leading-[9px] whitespace-nowrap">
        {lorem.map((l) => <span key={l} className="block">{l}</span>)}
      </p>
    </div>
    <div className="absolute inset-x-0 top-[457px] h-px bg-[#e6e6e6]" />
    <ul className="relative mt-[3px] grid h-[322px] shrink-0 auto-rows-fr pl-[20px] text-[7px] leading-[9px]">
      {tree.map((n, i) => <TreeRow key={i} n={n} />)}
    </ul>
    <div className="ml-auto flex h-4 w-[188px] shrink-0 gap-[3px] bg-[#c9c8ce] px-1 pt-1 text-[8px]">
      <div className="flex h-4 flex-1 items-center rounded-xs bg-white pl-1">
        <svg viewBox="0 0 8 8" className="mr-0.5 w-2 fill-none stroke-[#999]"><circle cx="3" cy="3" r="2.500" /><path d="M5 5l2.500 2.500" /></svg>
        <input aria-label="Search" placeholder="Search" className="h-2.5 w-full border-l border-[#2684ff] text-[7px] outline-none placeholder:text-[#8f8f94]" />
      </div>
      <button className="h-4 text-[8px] text-[#0a7aff]">Cancel</button>
    </div>
  </div>
);

const Workspace = () => (
  <main className="flex min-w-0 flex-1 flex-col">
    <HRuler />
    <div className="flex min-h-0 flex-1">
      <VRuler />
      <div className="flex min-w-0 flex-1 flex-col bg-[#e4e4e4]">
        <div className="flex min-h-0 flex-1">
          <div className="min-w-0 flex-1 overflow-hidden bg-[#eee]"><PageArt /></div>
          <div className="w-2.5 pt-[202px]"><div className="ml-auto h-[216px] w-[3px] bg-[#f09068]" /></div>
        </div>
        <div className="flex h-2.5 shrink-0 items-end pl-[199px]"><div className="h-[3px] w-[309px] bg-[#f09068]" /></div>
      </div>
    </div>
  </main>
);

/* ---------- interactions panel ---------- */

const SectionTitle = ({ children }: Kids) => (
  <h2 className="h-6 border-b border-[#dcdcdc] bg-white pl-2.5 text-[10px] leading-[23px] text-[#555]">{children}</h2>
);

const Field = ({ id, tag, value, tone }: { id: string; tag: string; value: string; tone: string }) => (
  <div className="relative flex h-[26px] border border-[#d4d4d4] bg-[#fafafa]">
    <label htmlFor={id} className="relative flex w-[43px] items-center bg-[#f4f4f4] pl-[17px] text-[10px] text-[#b4b4b4]">{tag}</label>
    <svg viewBox="0 0 12 24" className="h-6 w-3"><path d="M0 0l11.500 12L0 24z" fill="#f4f4f4" /><path d="M0 0l11.500 12L0 24" fill="none" stroke="#d8d8d8" /></svg>
    <select id={id} className={"flex-1 appearance-none pl-[5px] text-[13px] outline-none " + tone}><option>{value}</option></select>
    <span className="pointer-events-none flex w-[21px] items-center justify-center border-l border-[#d4d4d4]"><Caret className="scale-y-125 fill-[#a0a0a0]" /></span>
  </div>
);

const InteractionsPanel = () => (
  <aside className="w-[260px] shrink-0 border-l border-[#d0d0d0] bg-[#f5f5f5]">
    <SectionTitle>INTERACTIONS</SectionTitle>
    <div className="border-b border-[#dcdcdc] pt-3 pb-[11px]">
      <div className="flex h-[60px] items-center bg-white pl-[18px]">
        <Bolt className="h-[30px] w-[21px] text-[#ff6a1c]" />
        <p className="ml-[18px] pb-1.5 text-[11px] leading-4 text-black">Create prototypes and simulate user<br />experience by adding interactions to<br />your projects.</p>
      </div>
    </div>
    <SectionTitle>ADD INTERACTION</SectionTitle>
    <div className="flex h-[106px] flex-col gap-1.5 border-b border-[#dcdcdc] pt-[7px] pr-[13px] pl-[13px]">
      <Field id="on" tag="ON" value="Click or Tap" tone="text-[#808080]" />
      <Field id="do" tag="DO" value="Select Action" tone="text-[#c2c2c2]" />
      <button className="h-7 w-[123px] rounded-xs border border-[#7699d0] bg-[#79aced] text-xs text-white">Done</button>
    </div>
    <SectionTitle>HOTSPOTS</SectionTitle>
    <div className="flex h-[50px] items-start border-b border-[#dcdcdc] pt-2.5 pl-[13px]">
      <button className="flex h-7 w-[95px] items-center rounded-xs border border-[#ccc] pl-[5px] text-[11px] text-[#006ce6]">
        <svg viewBox="0 0 10 15" className="mr-2.5 h-[15px] w-2.5 shrink-0 fill-current"><path d="M2.500 4.500q1.200-1.500 2.400 0V8l4 .8q1.100.4.900 1.700l-.8 4.500H3.500L.5 11q-.8-1.500.5-1.800l1.500.8z" /><path d="M.8 4.500a3 3 0 1 1 5.800 0" fill="none" stroke="currentColor" strokeWidth=".9" strokeDasharray="1 1" /></svg>
        Hotspots
        <Caret className="ml-2.5 fill-[#006ce6]" />
      </button>
      <label className="ml-[26px] flex pt-1 text-[13px] text-black">
        <span className="relative mr-[5px] flex size-4">
          <input type="checkbox" defaultChecked className="size-4 appearance-none rounded-xs border border-[#8c3a20] bg-linear-to-b from-[#c3552b] to-[#e27a50]" />
          <svg viewBox="0 0 16 16" className="pointer-events-none absolute size-4 fill-none stroke-white" strokeWidth="2.300"><path d="M3 7.500l3.500 4L13.500 3.500" /></svg>
        </span>
        <span className="pt-1 leading-4">Show hotspots</span>
      </label>
    </div>
  </aside>
);

export default function App() {
  return (
    <div className="flex h-screen flex-col overflow-hidden bg-white font-['Liberation_Sans',Arial,sans-serif]">
      <TopPanel />
      <div className="flex min-h-0 flex-1">
        <Launcher />
        <div className="flex min-w-0 flex-1 flex-col bg-[#f2f1f0]">
          <TabStrip />
          <NavBar />
          <BookmarkBar />
          <AppHeader />
          <div className="flex min-h-0 flex-1">
            <Rail />
            <PagesPanel />
            <Workspace />
            <InteractionsPanel />
          </div>
        </div>
      </div>
    </div>
  );
}
